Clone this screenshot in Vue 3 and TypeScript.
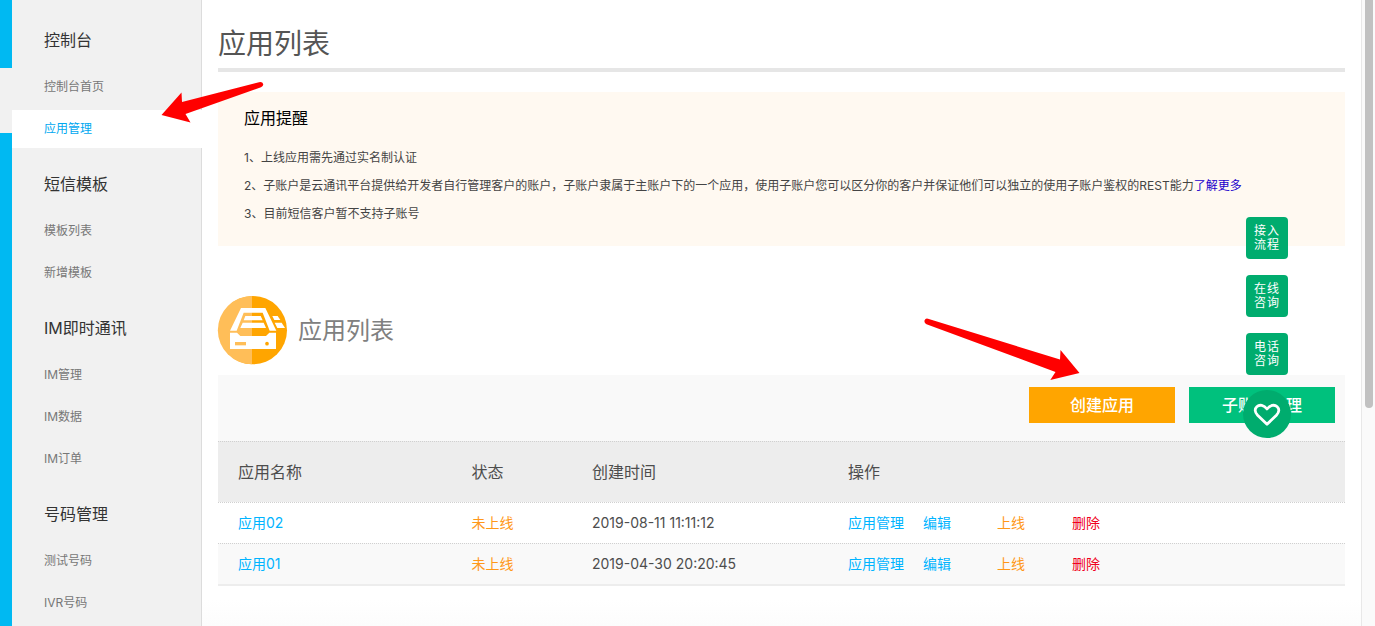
<script setup lang="ts">
interface MenuGroup {
  title: string
  items: string[]
}

interface AppRow {
  name: string
  status: string
  created: string
}

const groups: MenuGroup[] = [
  { title: '控制台', items: ['控制台首页', '应用管理'] },
  { title: '短信模板', items: ['模板列表', '新增模板'] },
  { title: 'IM即时通讯', items: ['IM管理', 'IM数据', 'IM订单'] },
  { title: '号码管理', items: ['测试号码', 'IVR号码'] },
]
const activeItem = '应用管理'

const rows: AppRow[] = [
  { name: '应用02', status: '未上线', created: '2019-08-11 11:11:12' },
  { name: '应用01', status: '未上线', created: '2019-04-30 20:20:45' },
]

const shortcuts: string[][] = [
  ['接入', '流程'],
  ['在线', '咨询'],
  ['电话', '咨询'],
]
</script>

<template>
  <div class="page">
    <div class="rail">
      <div class="rail-top"></div>
      <div class="rail-gap"></div>
      <div class="rail-rest"></div>
    </div>

    <nav class="sidebar">
      <section v-for="group in groups" :key="group.title">
        <h3>{{ group.title }}</h3>
        <a v-for="item in group.items" :key="item" :class="{ active: item === activeItem }">{{ item }}</a>
      </section>
    </nav>

    <main class="main">
      <h1>应用列表</h1>

      <section class="notice">
        <h4>应用提醒</h4>
        <p>1、上线应用需先通过实名制认证</p>
        <p>2、子账户是云通讯平台提供给开发者自行管理客户的账户，子账户隶属于主账户下的一个应用，使用子账户您可以区分你的客户并保证他们可以独立的使用子账户鉴权的REST能力<a>了解更多</a></p>
        <p>3、目前短信客户暂不支持子账号</p>
      </section>

      <header class="list-head">
        <svg class="drive" viewBox="0 0 207 207">
          <circle cx="104.500" cy="102.500" r="102.500" fill="#ffa500" />
          <path d="M102 0A102.500 102.500 0 0 0 102 205Z" fill="#ffbe58" />
          <g fill="#fff">
            <path d="M69 36H142L175 104H155L134 50H77L56 104H36Z" />
            <path d="M82 60H128L134 73H77Z" />
            <path d="M74 80H137L144 96H67Z" />
            <path d="M163 60H179L187 72H169Z" />
            <path d="M170 80H191L201 96H178Z" />
            <path d="M36 110H57L67 120H144L154 110H174V159H36Z" />
          </g>
          <path d="M51 138H84V148H51Z" fill="#ffbe58" />
          <circle cx="147" cy="143" r="5.500" fill="#ffa500" />
        </svg>
        <h2>应用列表</h2>
      </header>

      <div class="toolbar">
        <button class="create">创建应用</button>
        <button class="sub">子账户管理</button>
      </div>

      <div class="table">
        <div class="row head">
          <span>应用名称</span>
          <span>状态</span>
          <span>创建时间</span>
          <span>操作</span>
        </div>
        <div v-for="row in rows" :key="row.name" class="row">
          <a class="blue">{{ row.name }}</a>
          <span class="orange">{{ row.status }}</span>
          <span class="date">{{ row.created }}</span>
          <span class="ops">
            <a class="blue">应用管理</a>
            <a class="blue">编辑</a>
            <a class="orange">上线</a>
            <a class="red">删除</a>
          </span>
        </div>
      </div>
    </main>

    <div class="scroll"><div class="thumb"></div></div>

    <aside class="float">
      <div v-for="(lines, i) in shortcuts" :key="i" class="shortcut">
        <span v-for="line in lines" :key="line">{{ line }}</span>
      </div>
      <div class="heart">
        <svg viewBox="0 0 48 48">
          <path d="M24 34.300L14.600 25.200C11.500 22 11.600 18.700 13.800 16.700C16.600 14.200 20.900 15 24 19C27.100 15 31.400 14.200 34.200 16.700C36.400 18.700 36.500 22 33.400 25.200Z" />
        </svg>
      </div>
    </aside>

    <svg class="arrows" viewBox="0 0 1375 626">
      <path d="M161.500 115L181.500 92.500L182 102L259 82.200Q262.500 81.500 263.200 84Q263.500 86.200 261 87.200L185.500 114L190.500 122.500Z" />
      <path d="M1079.500 373L1060.500 350L1060 359.500L928 318.800Q925.500 318 924.500 320.500Q924 323 926.500 324.200L1055.500 372L1050.300 380Z" />
    </svg>
  </div>
</template>

<style>
html,
body {
  margin: 0;
  overflow: hidden;
}
</style>

<style scoped>
.page {
  position: relative;
  display: flex;
  width: 1375px;
  height: 626px;
  overflow: hidden;
  background: linear-gradient(#fff 600px, #fcfcfc 626px);
  color: #4d4d4d;
  font-family: Inter, "Noto Sans CJK SC", sans-serif;
}
h1,
h2,
h3,
h4,
p {
  margin: 0;
  font-weight: 400;
}
.rail {
  width: 12px;
  display: flex;
  flex-direction: column;
}
.rail-top {
  height: 68px;
  background: #00b9f2;
}
.rail-gap {
  height: 65px;
  background: #f1f1f1;
}
.rail-rest {
  flex: 1;
  background: #00b9f2;
}
.sidebar {
  box-sizing: border-box;
  width: 190px;
  height: 626px;
  padding-top: 8px;
  background: #f1f1f1;
  border-right: 1px solid #dcdcdc;
}
.sidebar h3 {
  height: 60px;
  padding-left: 32px;
  font-size: 16px;
  line-height: 64px;
  color: #333;
}
.sidebar a {
  display: block;
  height: 38px;
  margin-bottom: 4px;
  padding-left: 32px;
  font-size: 12px;
  line-height: 37px;
  color: #777;
}
.sidebar a.active {
  margin-right: -1px;
  background: #fff;
  color: #00a8f0;
}
.main {
  width: 1127px;
  margin-left: 16px;
}
h1 {
  height: 68px;
  border-bottom: 4px solid #e6e6e6;
  font-size: 28px;
  line-height: 89px;
  color: #555;
}
.notice {
  box-sizing: border-box;
  height: 154px;
  margin-top: 20px;
  padding: 12px 26px 0;
  background: #fff9f1;
}
.notice h4 {
  height: 40px;
  font-size: 16px;
  line-height: 28px;
  color: #000;
}
.notice p {
  height: 28px;
  font-size: 12px;
  line-height: 28px;
  color: #444;
  white-space: nowrap;
}
.notice a {
  color: #2200cc;
}
.list-head {
  display: flex;
  align-items: center;
  height: 69px;
  margin-top: 50px;
}
.drive {
  width: 69px;
  height: 69px;
  overflow: visible;
}
h2 {
  margin-left: 11px;
  font-size: 24px;
  line-height: 36px;
  color: #808080;
}
.toolbar {
  box-sizing: border-box;
  display: flex;
  justify-content: flex-end;
  gap: 14px;
  height: 66px;
  margin-top: 10px;
  padding: 12px 10px 0;
  background: #f9f9f9;
}
.toolbar button {
  width: 146px;
  height: 36px;
  padding: 0;
  border: 0;
  font: 500 16px/36px Inter, "Noto Sans CJK SC", sans-serif;
  color: #fff;
}
.create {
  background: #ffa500;
}
.sub {
  background: #00c17d;
}
.table {
  border-bottom: 2px solid #ededed;
}
.row {
  display: grid;
  grid-template-columns: 233.5px 120.5px 256px 1fr;
  height: 40px;
  padding-left: 20px;
  border-top: 1px dotted #d0d0d0;
  font-size: 14px;
  line-height: 40px;
}
.row.head {
  height: 60px;
  font-size: 16px;
  line-height: 60px;
  background: #ededed;
}
.row:last-child {
  background: #f9f9f9;
}
.ops {
  display: grid;
  grid-template-columns: 75px 74px 75px 60px;
}
.blue {
  color: #00b4ff;
}
.orange {
  color: #ff9818;
}
.red {
  color: #f00020;
}
.scroll {
  box-sizing: border-box;
  width: 14px;
  height: 626px;
  margin-left: 16px;
  padding-left: 3px;
  border-left: 1px solid #e8e8e8;
  background: #fafafa;
}
.thumb {
  width: 8px;
  height: 408px;
  border-radius: 0 0 4px 4px;
  background: #c1c1c1;
}
.float {
  position: absolute;
  top: 217px;
  left: 1243px;
  display: flex;
  flex-direction: column;
  align-items: center;
  gap: 16px;
  width: 48px;
}
.shortcut {
  box-sizing: border-box;
  width: 42px;
  height: 42px;
  padding-top: 7px;
  border-radius: 4px;
  background: #00ac6e;
  color: #fff;
  font-size: 12px;
  font-weight: 400;
  line-height: 14px;
  letter-spacing: 1px;
  text-align: center;
}
.shortcut span {
  display: block;
}
.heart {
  width: 48px;
  height: 48px;
  margin-top: -1px;
  border-radius: 50%;
  background: #00ac6e;
}
.heart svg {
  display: block;
  width: 48px;
  height: 48px;
  fill: none;
  stroke: #fff;
  stroke-width: 2.8;
  stroke-linejoin: round;
}
.arrows {
  position: absolute;
  inset: 0;
  width: 1375px;
  height: 626px;
  fill: #f00;
  pointer-events: none;
}
</style>
